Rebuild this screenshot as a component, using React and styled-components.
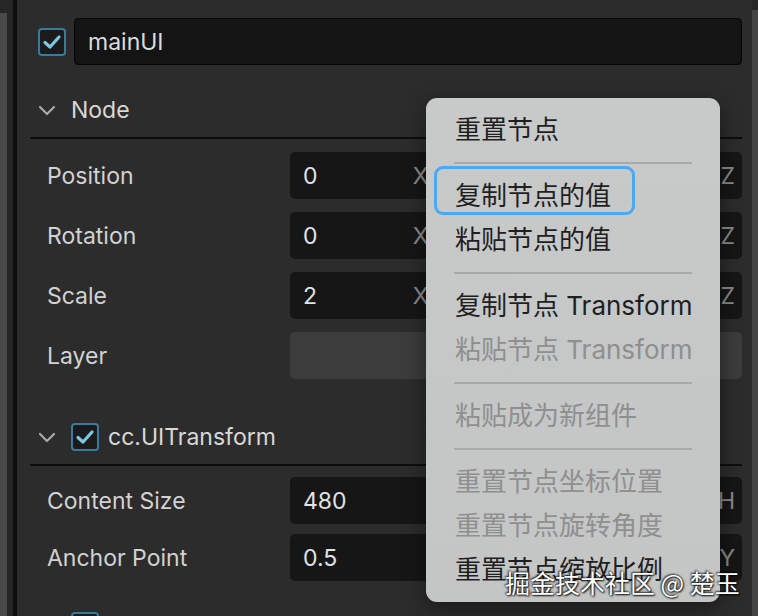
import React from "react";
import styled, { createGlobalStyle } from "styled-components";

const Global = createGlobalStyle`
  html, body { margin: 0; padding: 0; background: #262626; }
  body { width: 758px; height: 616px; overflow: hidden; font-family: Inter, "Noto Sans CJK SC", sans-serif; }
  #root { height: 616px; }
`;

const Page = styled.div`
  position: relative;
  display: flex;
  width: 758px;
  height: 616px;
  overflow: hidden;
`;

const LeftStrip = styled.div`
  display: flex;
  width: 17px;
  flex: none;
`;
const GreyBar = styled.div`
  width: 7px;
  margin-top: 13px;
  background: #4a4a4a;
`;
const DarkBar = styled.div`
  width: 6px;
  background: #252525;
`;
const BlackBar = styled.div`
  width: 4px;
  background: #0e0e0e;
`;

const RightStrip = styled.div`
  width: 6px;
  flex: none;
  margin-top: 10px;
  background: #454545;
`;

const Panel = styled.div`
  flex: 1;
  background: #2c2c2c;
  padding: 18px 10px 0 13px;
  display: flex;
  flex-direction: column;
  color: #d4d4d4;
  font-size: 23px;
  & > * { flex-shrink: 0; }
`;

const NameRow = styled.div`
  display: flex;
  align-items: center;
  gap: 8px;
  padding-left: 8px;
  height: 47px;
`;

const Box = styled.div`
  width: 28px;
  height: 28px;
  box-sizing: border-box;
  border: 2px solid #3b7a9a;
  border-radius: 4px;
  background: #1b1b1b;
  display: flex;
  align-items: center;
  justify-content: center;
  flex: none;
`;

const NameInput = styled.div`
  flex: 1;
  height: 47px;
  box-sizing: border-box;
  background: #141414;
  border: 1px solid #050505;
  border-radius: 4px;
  display: flex;
  align-items: center;
  padding-left: 13px;
  color: #dcdcdc;
`;

const Header = styled.div`
  display: flex;
  align-items: center;
  height: 52px;
  box-sizing: border-box;
  margin-top: ${(p) => p.$mt}px;
  padding: 0 0 4px 8px;
  border-bottom: 2px solid #0d0d0d;
  gap: 15px;
  color: #d8d8d8;
`;

const HeaderTitle = styled.span`
  margin-left: ${(p) => (p.$withBox ? -6 : 0)}px;
`;

const Rows = styled.div`
  display: flex;
  flex-direction: column;
  gap: ${(p) => p.$gap}px;
  padding-top: ${(p) => p.$pt}px;
`;

const Row = styled.div`
  display: grid;
  grid-template-columns: 260px 1fr;
  align-items: center;
  height: 47px;
`;

const Label = styled.span`
  padding-left: 17px;
  color: #d2d2d2;
`;

const Fields = styled.div`
  display: grid;
  grid-template-columns: repeat(${(p) => p.$n}, 1fr);
  gap: 8px;
  height: 47px;
`;

const Field = styled.div`
  display: flex;
  align-items: center;
  justify-content: space-between;
  background: ${(p) => (p.$disabled ? "#3c3c3c" : "#161616")};
  border-radius: 5px;
  padding: 0 7px 0 13px;
  color: #e2e2e2;
`;

const Suffix = styled.span`
  color: #8b8b8b;
`;

const Menu = styled.div`
  position: absolute;
  left: 426px;
  top: 98px;
  width: 294px;
  height: 504px;
  box-sizing: border-box;
  padding: 10px 0;
  background: linear-gradient(180deg, #c8c9c9 0%, #c4c5c5 100%);
  border-radius: 11px;
  box-shadow: 0 6px 22px rgba(0, 0, 0, 0.45);
  display: flex;
  flex-direction: column;
  font-size: 26px;
`;

const Item = styled.div`
  height: 44px;
  display: flex;
  align-items: center;
  padding-left: 29px;
  color: ${(p) => (p.$disabled ? "#8e8f8f" : "#1f1f1f")};
  white-space: nowrap;
`;

const ItemText = styled.span`
  position: relative;
  line-height: 1;
  &::before {
    content: "";
    display: ${(p) => (p.$focused ? "block" : "none")};
    position: absolute;
    left: -21px;
    right: -24px;
    top: -17px;
    bottom: -6px;
    border: 3px solid #4ba8f3;
    border-radius: 9px;
  }
`;

const Sep = styled.div`
  height: 22px;
  display: flex;
  align-items: center;
  padding: 0 28px;
  &::after {
    content: "";
    flex: 1;
    height: 2px;
    background: #a8a9a9;
  }
`;

const Watermark = styled.div`
  position: absolute;
  left: 505px;
  top: 564px;
  font-size: 25px;
  color: #fff;
  font-family: "Noto Sans CJK SC", sans-serif;
  text-shadow: 0 0 2px #000, 1px 1px 2px rgba(0, 0, 0, 0.9), -1px -1px 2px rgba(0, 0, 0, 0.6);
  white-space: nowrap;
`;

const Chevron = () => (
  <svg width="18" height="11" viewBox="0 0 18 11" style={{ flex: "none" }}>
    <path d="M2 2 L9 9 L16 2" fill="none" stroke="#a9a9a9" strokeWidth="2.2" strokeLinecap="round" strokeLinejoin="round" />
  </svg>
);

const Check = () => (
  <Box>
    <svg width="20" height="16" viewBox="0 0 20 16">
      <path d="M3 8.5 L8 13 L17 3" fill="none" stroke="#7cc6e6" strokeWidth="3.2" strokeLinecap="round" strokeLinejoin="round" />
    </svg>
  </Box>
);

const nodeRows = [
  { label: "Position", fields: [["0", "X"], ["0", "Y"], ["0", "Z"]] },
  { label: "Rotation", fields: [["0", "X"], ["0", "Y"], ["0", "Z"]] },
  { label: "Scale", fields: [["2", "X"], ["2", "Y"], ["2", "Z"]] },
];

const uiRows = [
  { label: "Content Size", fields: [["480", "W"], ["320", "H"]] },
  { label: "Anchor Point", fields: [["0.5", "X"], ["0.5", "Y"]] },
];

const menuItems = [
  { t: "重置节点" },
  "sep",
  { t: "复制节点的值", focused: true },
  { t: "粘贴节点的值" },
  "sep",
  { t: "复制节点 Transform" },
  { t: "粘贴节点 Transform", disabled: true },
  "sep",
  { t: "粘贴成为新组件", disabled: true },
  "sep",
  { t: "重置节点坐标位置", disabled: true },
  { t: "重置节点旋转角度", disabled: true },
  { t: "重置节点缩放比例" },
];

function VectorRow({ row }) {
  return (
    <Row>
      <Label>{row.label}</Label>
      <Fields $n={row.fields.length}>
        {row.fields.map(([v, s], i) => (
          <Field key={i}>
            <span>{v}</span>
            <Suffix>{s}</Suffix>
          </Field>
        ))}
      </Fields>
    </Row>
  );
}

export default function App() {
  return (
    <>
      <Global />
      <Page>
        <LeftStrip>
          <GreyBar />
          <DarkBar />
          <BlackBar />
        </LeftStrip>
        <Panel>
          <NameRow>
            <Check />
            <NameInput>mainUI</NameInput>
          </NameRow>

          <Header $mt={22}>
            <Chevron />
            <HeaderTitle>Node</HeaderTitle>
          </Header>
          <Rows $gap={13} $pt={13}>
            {nodeRows.map((r) => (
              <VectorRow key={r.label} row={r} />
            ))}
            <Row>
              <Label>Layer</Label>
              <Fields $n={1}>
                <Field $disabled />
              </Fields>
            </Row>
          </Rows>

          <Header $mt={35}>
            <Chevron />
            <Check />
            <HeaderTitle $withBox>cc.UITransform</HeaderTitle>
          </Header>
          <Rows $gap={10} $pt={11}>
            {uiRows.map((r) => (
              <VectorRow key={r.label} row={r} />
            ))}
          </Rows>

          <Header $mt={22}>
            <Chevron />
            <Check />
            <HeaderTitle $withBox>cc.Widget</HeaderTitle>
          </Header>
        </Panel>
        <RightStrip />

        <Menu>
          {menuItems.map((m, i) =>
            m === "sep" ? (
              <Sep key={i} />
            ) : (
              <Item key={i} $disabled={m.disabled}>
                <ItemText $focused={m.focused}>{m.t}</ItemText>
              </Item>
            )
          )}
        </Menu>
        <Watermark>掘金技术社区 @ 楚玉</Watermark>
      </Page>
    </>
  );
}
